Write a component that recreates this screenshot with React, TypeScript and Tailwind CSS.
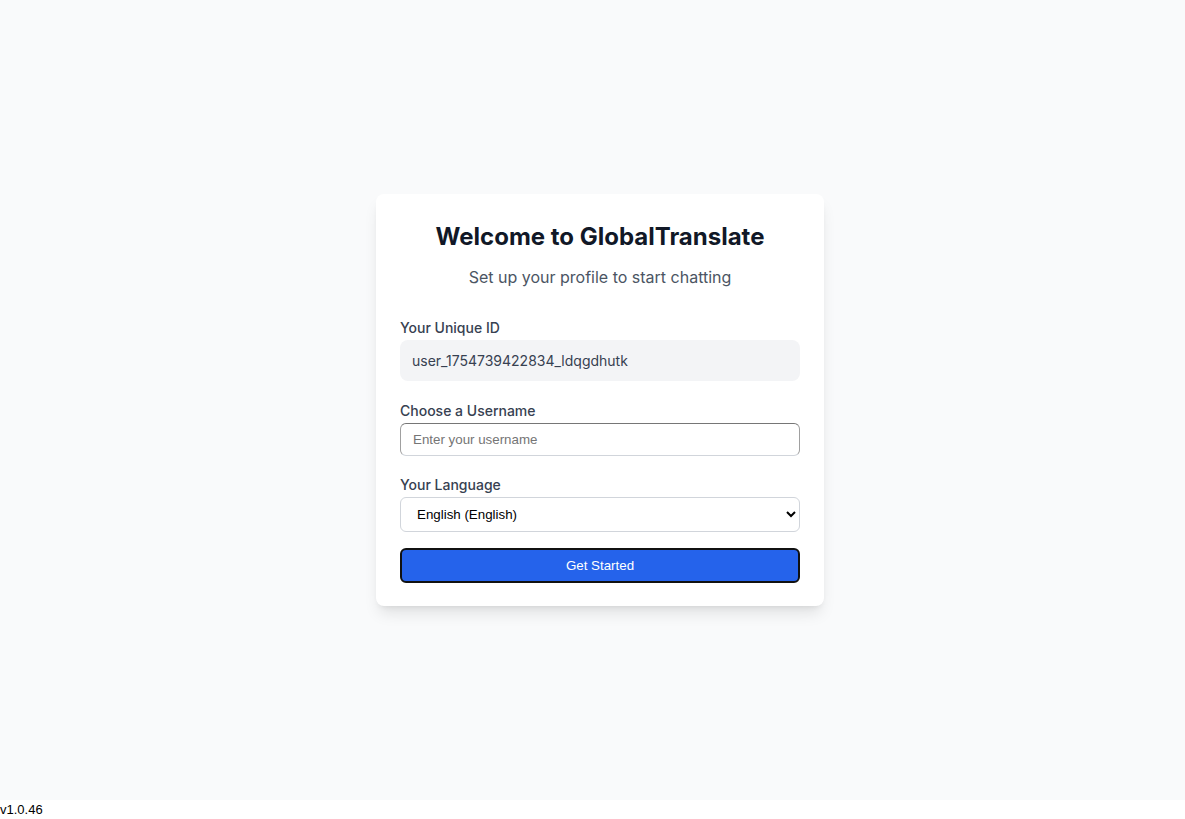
import { useState } from "react";

const LANGUAGES = [
  { code: "en", label: "English (English)" },
  { code: "es", label: "Spanish (Español)" },
  { code: "fr", label: "French (Français)" },
  { code: "de", label: "German (Deutsch)" },
];

export default function App() {
  const [username, setUsername] = useState("");
  const [language, setLanguage] = useState("en");
  const userId = "user_1754739422834_ldqgdhutk";

  return (
    <div className="bg-white font-['Liberation_Sans',Arial,sans-serif]">
      {/* MAIN */}
      <div className="h-[800px] bg-[#f9fafb] flex items-center justify-center pl-[15px]">
        <div className="w-[448px] bg-white rounded-lg shadow-lg px-6 pt-[27px] pb-[23px] font-['Inter',sans-serif]">
          <h1 className="text-2xl font-bold text-[#111827] text-center leading-8">
            Welcome to GlobalTranslate
          </h1>
          <p className="mt-[12px] text-base text-[#4b5563] text-center leading-6">
            Set up your profile to start chatting
          </p>

          {/* ID */}
          <div className="mt-[29px]">
            <label className="block text-sm font-medium text-[#374151] leading-5">
              Your Unique ID
            </label>
            <div className="mt-[2px] h-[41px] bg-[#f3f4f6] rounded-lg px-3 flex items-center text-sm text-[#374151]">
              {userId}
            </div>
          </div>

          {/* USERNAME */}
          <div className="mt-[20px]">
            <label className="block text-sm font-medium text-[#374151] leading-5">
              Choose a Username
            </label>
            <input
              value={username}
              onChange={(e) => setUsername(e.target.value)}
              placeholder="Enter your username"
              className="mt-[2px] w-full h-[33px] px-3 rounded-md border border-[#a0a0a0] border-t-[#767676] border-b-[#d1d5db] text-[13.33px] font-['Liberation_Sans',Arial,sans-serif] placeholder:text-[#757575] outline-none"
            />
          </div>

          {/* LANGUAGE */}
          <div className="mt-[19px]">
            <label className="block text-sm font-medium text-[#374151] leading-5">
              Your Language
            </label>
            <select
              value={language}
              onChange={(e) => setLanguage(e.target.value)}
              className="mt-[2px] w-full h-[35px] px-3 rounded-md border border-[#d1d5db] bg-white text-[13.33px] text-black font-['Liberation_Sans',Arial,sans-serif]"
            >
              {LANGUAGES.map((l) => (
                <option key={l.code} value={l.code}>
                  {l.label}
                </option>
              ))}
            </select>
          </div>

          <button className="mt-4 w-full h-[35px] rounded-md bg-[#2563eb] border-2 border-[#111111] text-white text-[13.33px] font-['Liberation_Sans',Arial,sans-serif]">
            Get Started
          </button>
        </div>
      </div>

      {/* VERSION */}
      <div className="text-[13px] text-black leading-[19px]">v1.0.46</div>
    </div>
  );
}
